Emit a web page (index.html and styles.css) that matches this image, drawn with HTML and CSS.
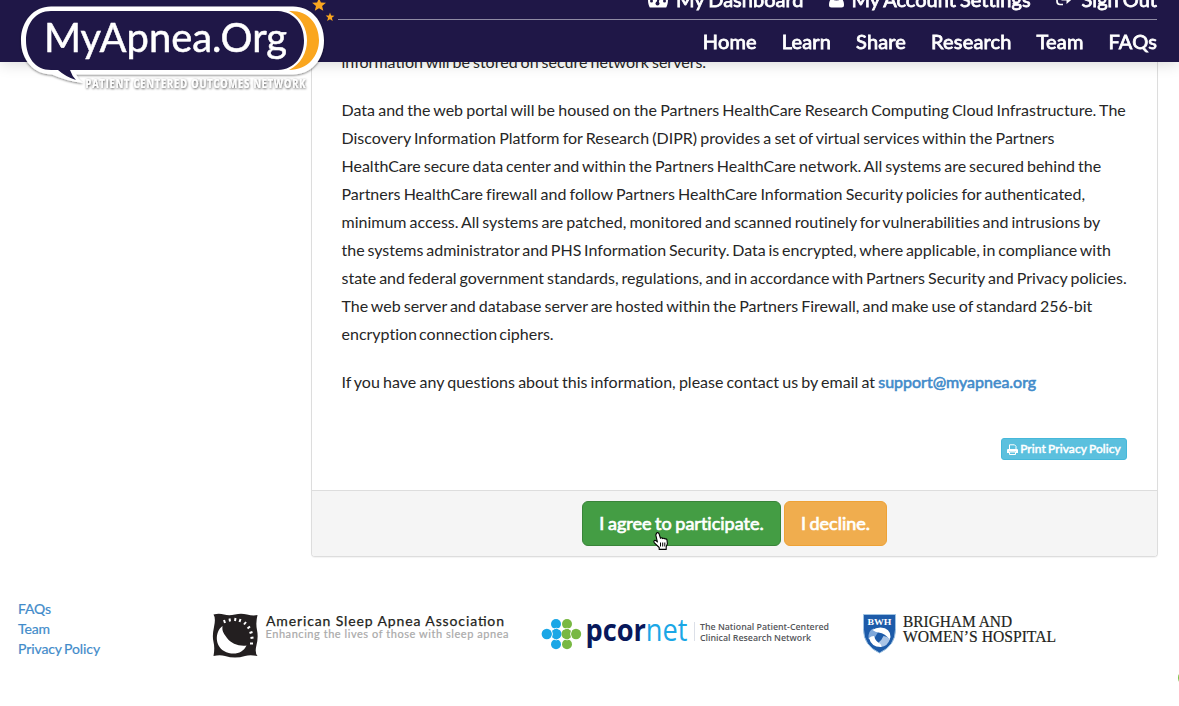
FILE: index.html
```html
<!DOCTYPE html>
<html lang="en">
<head>
<meta charset="utf-8">
<title>MyApnea.Org - Privacy Policy</title>
<link rel="stylesheet" href="styles.css">
</head>
<body>
<header class="topbar">
  <nav class="account-nav">
    <a class="account-link dashboard"><svg width="20" height="18" viewBox="0 0 20 18"><path fill="#fff" d="M10 0a10 10 0 0 0-10 10c0 3 .8 5.500 1.800 7.500h16.400c1-2 1.800-4.500 1.800-7.500a10 10 0 0 0-10-10z"/><path stroke="#1f1747" stroke-width="2" d="M9.500 13l1.500-6"/><g fill="#1f1747" stroke="none"><circle cx="9.500" cy="13.500" r="2"/><circle cx="3.500" cy="11" r="1.500"/><circle cx="16.500" cy="11" r="1.500"/><circle cx="5.500" cy="6" r="1.500"/><circle cx="14.500" cy="6" r="1.500"/></g></svg><span>My Dashboard</span></a>
    <a class="account-link settings"><svg width="15" height="18" viewBox="0 0 15 18"><circle cx="7.500" cy="5" r="4.500" fill="#fff"/><path fill="#fff" d="M3 9C1 9 0 12 0 15q0 2.500 2.500 2.500h10q2.500 0 2.500-2.500c0-3-1-6-3-6-3 2-6 2-9 0z"/></svg><span>My Account Settings</span></a>
    <a class="account-link signout"><svg width="18" height="16" viewBox="0 0 18 16"><path fill="none" stroke="#fff" stroke-width="1.700" d="M8 2H4Q1 2 1 5v6q0 3.500 3 3.500h3"/><path fill="#fff" d="M5.500 5.500h5V2L17.500 8l-7 6v-3.500h-5z"/></svg><span>Sign Out</span></a>
  </nav>
  <nav class="main-nav">
    <a>Home</a><a>Learn</a><a>Share</a><a>Research</a><a>Team</a><a>FAQs</a>
  </nav>
</header>

<svg class="brand" width="345" height="100" viewBox="0 0 345 100">
  <defs>
    <filter id="soft" x="-10%" y="-20%" width="120%" height="150%"><feDropShadow dx="0" dy="1" stdDeviation="1.300" flood-color="#000" flood-opacity=".5"/></filter>
    <filter id="glow" x="-5%" y="-40%" width="110%" height="190%"><feDropShadow dx=".5" dy=".8" stdDeviation="1" flood-color="#000" flood-opacity=".75"/></filter>
  </defs>
  <path filter="url(#soft)" fill="#fff" d="M51 6.500H293C311 6.500 324 21 324 40.500S311 74.500 293 74.500H76Q78 79 83 83Q66 81 52 74.500C34 74.500 21 60 21 40.500S34 6.500 51 6.500z"/>
  <path fill="#1f1747" d="M51 11H278C295 12 304 25 304 40.500S295 69.500 278 70H70Q72 76 76 80Q66 77 58 70H51C35 70 26 57 26 40.500S35 11 51 11z"/>
  <path fill="#faa61f" d="M289 11C308 10 319 24 319 40S308 70 289 70C313 58 313 23 289 11z"/>
  <path fill="#faa61f" d="M319-2l1.900 4.500 5.100.3-3.900 3.200 1.200 4.800-4.300-2.500-4.200 2.500 1.200-4.800-3.900-3.200 5-.3zM330 12.500l1.100 3 3.400.2-2.600 2.100.8 3.300-2.700-1.900-2.900 1.800 1-3.200-2.400-2.200 3.200-.1z"/>
  <text x="44" y="52" textLength="243" lengthAdjust="spacingAndGlyphs" class="brand-name">MyApnea.Org</text>
  <g filter="url(#glow)"><text transform="translate(85.500 87.500) scale(.74 1)" textLength="297" class="brand-tag">PATIENT CENTERED OUTCOMES NETWORK</text></g>
</svg>

<main class="panel">
  <div class="panel-body">
    <p class="w11">information will be stored on secure network servers.</p>
    <p><span class="w9">Data and the web portal will be housed on the Partners HealthCare Research Computing Cloud Infrastructure. The</span><br><span class="w9">Discovery Information Platform for Research (DIPR) provides a set of virtual services within the Partners</span><br><span class="w11">HealthCare secure data center and within the Partners HealthCare network. All systems are secured behind the</span><br><span class="w9">Partners HealthCare firewall and follow Partners HealthCare Information Security policies for authenticated,</span><br><span class="w11">minimum access. All systems are patched, monitored and scanned routinely for vulnerabilities and intrusions by</span><br><span class="w13">the systems administrator and PHS Information Security. Data is encrypted, where applicable, in compliance with</span><br><span class="w11">state and federal government standards, regulations, and in accordance with Partners Security and Privacy policies.</span><br><span class="w11">The web server and database server are hosted within the Partners Firewall, and make use of standard 256-bit</span><br><span class="w20">encryption connection ciphers.</span></p>
    <p class="w9">If you have any questions about this information, please contact us by email at <a class="mail">support@myapnea.org</a></p>
    <div class="print-row"><a class="print"><svg width="11" height="11" viewBox="0 0 11 11"><path fill="none" stroke="#fff" d="M2.500 5V.8h5l1.500 1.500V5M2.500 8h6v2.500h-6z"/><path fill="#fff" d="M1 5h9q1 0 1 1v3H9V7.500H2V9H0V6q0-1 1-1z"/></svg><span>Print Privacy Policy</span></a></div>
  </div>
  <div class="panel-footer">
    <a class="btn agree">I agree to participate.</a>
    <a class="btn decline">I decline.</a>
  </div>
</main>

<svg class="pointer" width="16" height="19" viewBox="0 0 16 19"><path fill="#fff" stroke="#000" stroke-width="1.100" stroke-linejoin="round" d="M3.500 1.200Q5-.2 6 1.700L7.500 6.300Q9 5.200 9.700 6.600 11 5.600 12 7q1.700-.5 2 1.200l.4 3.600-1.200 3v2.600H6.200V15.500L1.400 10.800Q.2 9 1.700 8.400q1-.3 2.700 1.600L2.800 3z"/><path stroke="#000" d="M7.500 10.500v4M9.700 10.500v4M11.800 10.500v4"/></svg>

<footer class="footer">
  <nav class="footer-links"><a>FAQs</a><a>Team</a><a>Privacy Policy</a></nav>
  <svg class="asaa" width="298" height="48" viewBox="212 612 298 48">
    <path fill="#231f20" d="M213.500 614.500Q219 613 224 614.500T235 614.500T247 614.500T257.500 615Q255.500 623 257 630T256.500 645T257.500 656Q250 654.500 245 656T235 657.500T225 656T213.500 656Q215 648 213.500 642T214 627T213.500 614.500z"/>
    <path fill="#fff" d="M222.500 626C214.500 632 215 646 224 651S243 653.500 246.500 645.500C239 646.500 231 643.500 227 638S222 631 222.500 626z"/>
    <g class="rays"><path d="M225 623l-1-3M230 621.500l-.5-3M235 621l.5-3M239.500 622l1-3M244 624.500l2-2.500M247.500 628.500l2.500-2M249.500 633l3-1M250.500 638l3-.5M250 643.500h3"/></g>
    <text x="266" y="626" textLength="238" class="asaa-name">American Sleep Apnea Association</text>
    <text x="265.500" y="638" textLength="243" class="asaa-tag">Enhancing the lives of those with sleep apnea</text>
  </svg>
  <svg class="pcor" width="290" height="40" viewBox="541 614 290 40">
    <path stroke="#1ba7e6" stroke-width="4" d="M546 634h10M556 624v20"/>
    <path stroke="#78b843" stroke-width="4" d="M567 634h10M567 624v20"/>
    <g fill="#1ba7e6"><circle cx="556" cy="624" r="5"/><circle cx="546.800" cy="634" r="5.200"/><circle cx="556.300" cy="634" r="5.200"/><circle cx="556" cy="644.200" r="5"/></g>
    <g fill="#78b843"><circle cx="567" cy="624" r="5"/><circle cx="566.700" cy="634" r="5.200"/><circle cx="576" cy="634" r="5.200"/><circle cx="567" cy="644.200" r="5"/></g>
    <path stroke="#fff" stroke-width=".9" fill="none" d="M551.500 629.500q4.800-2.500 9.500 0M551.500 638.600q4.800 2.500 9.500 0M562.300 629.500q4.800-2.500 9.500 0M562.300 638.600q4.800 2.500 9.500 0M551.500 630.500q2 3.500 0 7M571.500 630.500q-2 3.500 0 7"/>
    <text x="585.500" y="640.500" textLength="102" lengthAdjust="spacingAndGlyphs" class="pcor-light"><tspan class="pcor-bold">pcor</tspan>net</text>
    <path stroke="#dce0e8" d="M694.500 622v19"/>
    <text x="700" y="629.500" textLength="129" lengthAdjust="spacingAndGlyphs" class="pcor-tag">The National Patient-Centered</text>
    <text x="700" y="641" textLength="111" lengthAdjust="spacingAndGlyphs" class="pcor-tag">Clinical Research Network</text>
  </svg>
  <svg class="bwh" width="196" height="42" viewBox="862 613 196 42">
    <path fill="#1d5ba9" stroke="#9fc3e2" d="M863.500 614.500h32v15q0 16-16 23.500-16-7.500-16-23.500z"/>
    <path fill="#7fa8da" d="M868.500 639q-1-8 5-10.500l5 3-5 8z"/>
    <path fill="#fff" d="M872.500 630q3-2.500 8-2.500 10 .5 10 9.500l-1 3q-4-7-11-7.500-3-.5-6-2.500z"/>
    <path fill="#a9c4e6" d="M890 639q-2.500 7.500-9 8l-3.500-3.500q4-2.500 6-7.500 4 .5 6.500 3z"/>
    <path fill="#fff" d="M869 638q2-2 5-2 1.500 5.500 6.500 8 1 1.500 1 3-10 .5-12.500-9z"/>
    <text x="867.500" y="625" textLength="24" lengthAdjust="spacingAndGlyphs" class="bwh-mark">BWH</text>
    <text x="903" y="626.500" textLength="109" lengthAdjust="spacingAndGlyphs" class="bwh-name">BRIGHAM AND</text>
    <text x="903" y="641.500" textLength="153" lengthAdjust="spacingAndGlyphs" class="bwh-name">WOMEN’S HOSPITAL</text>
  </svg>
</footer>
<div class="edge-dot"></div>
</body>
</html>
```
FILE: styles.css
```css
* { box-sizing: border-box; }
body {
  margin: 0;
  width: 1179px;
  height: 706px;
  overflow: hidden;
  background: #fff;
  color: #262626;
  font: 16px/28px Lato, sans-serif;
  font-variant-ligatures: none;
}
svg { display: block; flex: none; }
.topbar {
  position: fixed;
  top: 0;
  left: 0;
  z-index: 2;
  width: 1179px;
  height: 62px;
  padding: 0 22px 0 338px;
  background: #1f1747;
  box-shadow: 0 2px 14px rgba(0, 0, 0, .15);
  color: #fff;
  font-size: 20px;
  -webkit-text-stroke: .8px #fff;
}
.account-nav {
  display: flex;
  justify-content: flex-end;
  gap: 25px;
  height: 20px;
  border-bottom: 1px solid #8f8ba4;
}
.account-link {
  display: flex;
  gap: 8px;
  height: 28px;
  margin-top: -14px;
  line-height: 27px;
  white-space: nowrap;
  word-spacing: -1px;
}
.account-link svg { margin-top: 4px; }
.main-nav {
  display: flex;
  justify-content: flex-end;
  gap: 25px;
  letter-spacing: .16px;
  line-height: 42px;
}
.brand { position: fixed; top: 0; left: 0; z-index: 3; }
.brand-name { fill: #fff; stroke: #fff; stroke-width: .5px; font: 40px Lato, sans-serif; }
.brand-tag { fill: #fff; font: 700 12.5px "Open Sans", sans-serif; }
.panel {
  width: 847px;
  height: 557px;
  margin-left: 311px;
  border: 1px solid #ddd;
  border-top: 0;
  border-radius: 0 0 4px 4px;
  box-shadow: 0 1px 1px rgba(0, 0, 0, .05);
}
.panel-body { height: 490px; padding: 48px 30px 0 29.5px; }
.panel-body p { margin: 0 0 20px; white-space: nowrap; }
.w9 { word-spacing: -.9px; }
.w11 { word-spacing: -1.1px; }
.w13 { word-spacing: -1.3px; }
.w20 { word-spacing: -2px; }
.mail { color: #428bca; -webkit-text-stroke: .6px #428bca; }
.print-row { display: flex; justify-content: flex-end; padding-top: 22px; }
.print {
  display: flex;
  align-items: center;
  justify-content: center;
  gap: 2px;
  width: 126px;
  height: 22px;
  border: 1px solid #46b8da;
  border-radius: 3px;
  background: #5bc0de;
  color: #fff;
  font-size: 12px;
  letter-spacing: .1px;
  word-spacing: -1px;
  -webkit-text-stroke: .5px #fff;
  white-space: nowrap;
}
.panel-footer {
  display: flex;
  justify-content: center;
  gap: 3px;
  height: 66px;
  padding-top: 10px;
  border-top: 1px solid #ddd;
  border-radius: 0 0 3px 3px;
  background: #f5f5f5;
}
.btn {
  height: 45px;
  border: 1px solid;
  border-radius: 6px;
  color: #fff;
  font-size: 18px;
  line-height: 42px;
  word-spacing: -1px;
  -webkit-text-stroke: .7px #fff;
  text-align: center;
  white-space: nowrap;
}
.agree { width: 199px; background: #449d44; border-color: #398439; }
.decline { width: 103px; background: #f0ad4e; border-color: #eea236; }
.pointer { position: absolute; left: 653px; top: 532px; }
.footer { display: flex; padding: 42px 0 0 18px; }
.footer-links {
  display: flex;
  flex-direction: column;
  width: 194px;
  color: #428bca;
  font-size: 14px;
  line-height: 20px;
  letter-spacing: -.1px;
  word-spacing: -1px;
  -webkit-text-stroke: .2px #428bca;
}
.asaa { margin-top: 13px; }
.pcor { margin: 15px 0 0 31px; }
.bwh { margin: 14px 0 0 31px; }
.rays { fill: none; stroke: #fff; stroke-width: 2; }
.asaa-name { fill: #231f20; stroke: #231f20; stroke-width: .25px; font: 14px Lato, sans-serif; }
.asaa-tag { fill: #aaa; stroke: #aaa; stroke-width: .2px; font: 11px Lato, sans-serif; }
.pcor-light { fill: #1ba7e6; font: 31px "Open Sans", sans-serif; }
.pcor-bold { fill: #08185b; font-weight: 700; }
.pcor-tag { fill: #55565a; font: 600 9.5px "Open Sans", sans-serif; }
.bwh-mark { fill: #fff; font: 700 9px "Liberation Serif", serif; }
.bwh-name { fill: #231f20; stroke: #231f20; stroke-width: .2px; font: 16px "Liberation Serif", serif; }
.edge-dot {
  position: absolute;
  left: 1178px;
  top: 669px;
  width: 18px;
  height: 18px;
  border-radius: 9px;
  background: #76c043;
}
```
